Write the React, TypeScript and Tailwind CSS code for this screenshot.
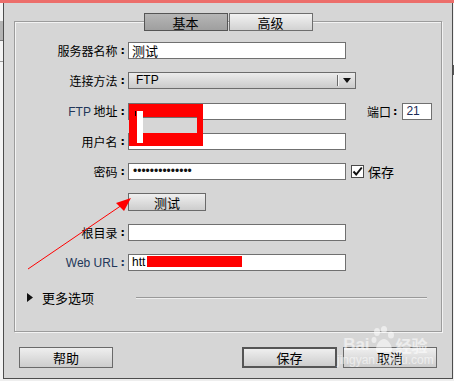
const btn =
  "flex items-center justify-center bg-gradient-to-b from-[#efefef] to-[#cdcdcd] border border-[#6a6a6a] text-[13px]";
const input = "h-[17px] bg-white border border-[#707070] flex items-center px-[3px] leading-[15px]";

function Label({ text, blue }: { text: React.ReactNode; blue?: boolean }) {
  return (
    <div className={"w-[111px] shrink-0 flex justify-end items-center pr-[1px] " + (blue ? "text-[#223659]" : "text-black")}>
      <span>{text}</span>
      <span className="ml-[3px] font-['DejaVu_Sans',sans-serif] text-[11px] font-bold">:</span>
    </div>
  );
}

function Row({ label, blue, className, children }: { label: React.ReactNode; blue?: boolean; className: string; children: React.ReactNode }) {
  return (
    <div className={"flex items-center h-[17px] " + className}>
      <Label text={label} blue={blue} />
      <div className="ml-[2px] flex items-center">{children}</div>
    </div>
  );
}

export default function App() {
  return (
    <div className="relative w-[454px] h-[381px] overflow-hidden bg-[#eeeeee] font-['Noto_Sans_CJK_SC',sans-serif] text-[12px] leading-[17px] text-black">
      <div className="h-[3px] bg-[#ec6e6b]" />
      <div className="flex">
        <div className="w-[3px] flex flex-col">
          <div className="h-[18px] bg-[#f4f4f4]" />
          <div className="h-[19px] bg-[#b4b4b4]" />
          <div className="h-[1px] bg-[#777]" />
          <div className="h-[20px] bg-[#f4f4f4]" />
          <div className="h-[1px] bg-[#999]" />
          <div className="flex-1 bg-[#f4f4f4]" />
        </div>
        <div className="w-[450px] h-[376px] bg-[#d6d6d6] border-x border-b border-[#4d4d4d] px-[10px] pt-[18px]">
          {/* group box */}
          <div className="h-[311px] border border-[#9c9c9c] shadow-[inset_1px_1px_0_#f3f3f3,1px_1px_0_#f3f3f3]">
            <div className="flex justify-center -mt-[9px]">
              <div className="w-[84px] h-[18px] flex items-center justify-center bg-gradient-to-b from-[#b6b6b6] to-[#9f9f9f] border border-[#555] text-[13px]">
                基本
              </div>
              <div className="ml-[1px] w-[84px] h-[18px] flex items-center justify-center bg-gradient-to-b from-[#f2f2f2] to-[#d2d2d2] border border-[#6e6e6e] text-[13px]">
                高级
              </div>
            </div>

            <Row label="服务器名称" className="mt-[11px]">
              <div className={input + " w-[218px] text-[13px]"}>测试</div>
            </Row>
            <Row label="连接方法" className="mt-[13px]">
              <div className="w-[228px] h-[17px] flex items-center border border-[#6c6c6c] bg-gradient-to-b from-[#ececec] to-[#cbcbcb]">
                <span className="flex-1 pl-[7px] font-['Liberation_Sans',sans-serif] text-[12px]">FTP</span>
                <div className="w-[1px] h-[11px] bg-[#6a6a6a] shadow-[1px_0_0_#f6f6f6]" />
                <span className="w-[17px] flex justify-center">
                  <svg width="8" height="5" viewBox="0 0 8 5">
                    <path d="M0 0H8L4 5Z" fill="#111" />
                  </svg>
                </span>
              </div>
            </Row>
            <Row
              label={
                <>
                  <span className="font-['Liberation_Sans',sans-serif] text-[#223659]">FTP</span> 地址
                </>
              }
              className="mt-[14px]"
            >
              <div className={input + " w-[218px]"} />
              <span className="ml-[21px]">端口</span>
              <span className="ml-[2px] font-['DejaVu_Sans',sans-serif] text-[11px] font-bold">:</span>
              <div className={input + " ml-[5px] w-[30px] font-['Liberation_Sans',sans-serif] text-[12px] text-[#1a2a55]"}>21</div>
            </Row>
            <Row label="用户名" className="mt-[13px]">
              <div className={input + " w-[218px]"} />
            </Row>
            <Row label="密码" className="mt-[13px]">
              <div className={input + " w-[218px] font-['Liberation_Sans',sans-serif] text-[12px] text-[#111] pl-[4px]"}>
                ••••••••••••••
              </div>
              <div className="ml-[5px] w-[13px] h-[13px] bg-white border border-[#4a4a4a] flex items-center justify-center">
                <svg width="11" height="11" viewBox="0 0 11 11">
                  <path d="M1.5 5.5L4.2 8.5L9.8 1.5" fill="none" stroke="#111" strokeWidth="2" />
                </svg>
              </div>
              <span className="ml-[4px] text-[13px]">保存</span>
            </Row>
            <div className="flex mt-[13px] h-[18px]">
              <div className="w-[113px] shrink-0" />
              <div className={btn + " w-[78px] h-[18px]"}>测试</div>
            </div>
            <Row label="根目录" className="mt-[13px]">
              <div className={input + " w-[218px]"} />
            </Row>
            <Row label={<span className="font-['Liberation_Sans',sans-serif]">Web URL</span>} blue className="mt-[13px]">
              <div className={input + " w-[218px] font-['Liberation_Sans',sans-serif] text-[12px]"}>htt</div>
            </Row>

            <div className="flex items-center h-[17px] mt-[18px]">
              <svg className="ml-[12px]" width="6" height="9" viewBox="0 0 6 9">
                <path d="M0 0L6 4.5L0 9Z" fill="#111" />
              </svg>
              <span className="ml-[9px] text-[13px]">更多选项</span>
              <div className="ml-[42px] w-[291px] h-[1px] bg-[#999] shadow-[0_1px_0_#eeeeee]" />
            </div>
          </div>

          {/* bottom buttons */}
          <div className="flex justify-between mt-[15px] px-[5px]">
            <div className={btn + " w-[94px] h-[21px]"}>帮助</div>
            <div className="flex gap-[6px]">
              <div className={btn + " w-[95px] h-[21px] border-2 border-[#555]"}>保存</div>
              <div className={btn + " w-[94px] h-[21px]"}>取消</div>
            </div>
          </div>
        </div>
        <div className="w-[1px] flex flex-col">
          <div className="h-[62px] bg-[#f0f0f0]" />
          <div className="h-[10px] bg-[#555]" />
          <div className="flex-1 bg-[#f0f0f0]" />
        </div>
      </div>

      {/* redaction marks */}
      <div className="absolute left-[129px] top-[104px] w-[74px] h-[42px] bg-[#ff0000]">
        <div className="absolute left-[8px] top-[7px] w-[6px] h-[32px] bg-white" />
        <div className="absolute left-[6px] top-[7px] w-[1px] h-[5px] bg-black" />
        <div className="absolute left-[14px] top-[13px] w-[54px] h-[16px] bg-[#d6d6d6] border-t border-[#707070]" />
      </div>
      <div className="absolute left-[147px] top-[256px] w-[95px] h-[11px] bg-[#ff0000]" />

      {/* arrow annotation */}
      <svg className="absolute left-0 top-0" width="454" height="381" viewBox="0 0 454 381">
        <line x1="28" y1="269" x2="122" y2="205" stroke="#f00" strokeWidth="1" />
        <path d="M131 198L116 203L124 211Z" fill="#f00" />
      </svg>

      {/* watermark */}
      <div className="absolute left-[337px] top-[324px] flex flex-col items-center text-white/55 pointer-events-none">
        <div className="flex items-end h-[30px]">
          <span className="font-['Liberation_Sans',sans-serif] font-bold text-[17px] leading-[18px]">Bai</span>
          <svg width="24" height="28" viewBox="0 0 24 28" className="mx-[1px]">
            <g fill="rgba(255,255,255,0.55)">
              <ellipse cx="6" cy="6" rx="3" ry="4" />
              <ellipse cx="13" cy="3.5" rx="3" ry="3.5" />
              <ellipse cx="20" cy="9" rx="3" ry="3.5" />
              <ellipse cx="3" cy="14" rx="2.5" ry="3" />
              <path d="M5 24C5 18 9 13 13 13C17 13 21 19 21 24C21 27 17 26 13 26C9 26 5 27 5 24Z" />
            </g>
          </svg>
          <span className="font-bold text-[16px] leading-[18px]">经验</span>
        </div>
        <span className="font-['Liberation_Sans',sans-serif] text-[12px] leading-[14px] -mt-[1px]">jingyan.baidu.com</span>
      </div>
    </div>
  );
}
